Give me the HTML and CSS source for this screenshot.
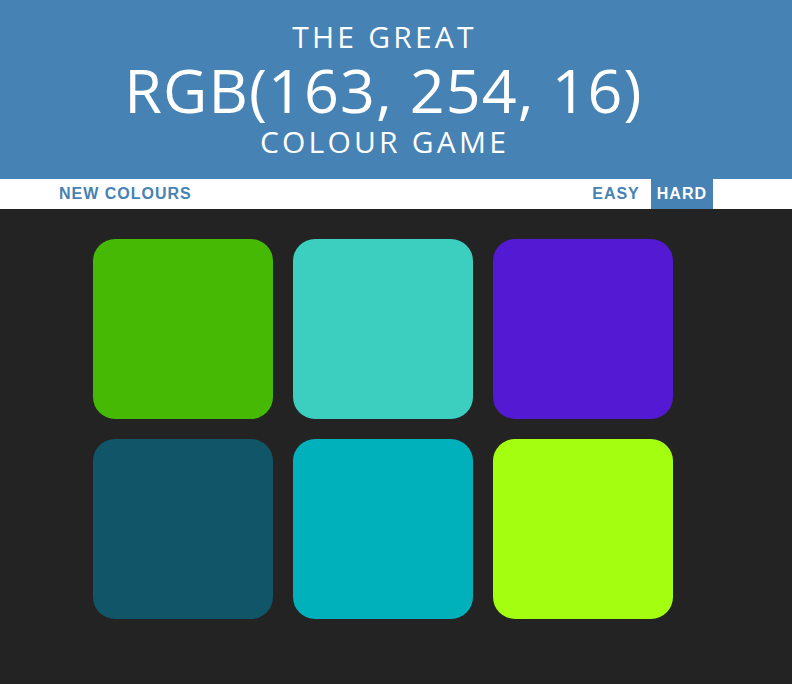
FILE: index.html
```html
<!DOCTYPE html>
<html lang="en">
<head>
<meta charset="utf-8">
<title>The Great RGB Colour Game</title>
<link rel="stylesheet" href="styles.css">
</head>
<body>
<header class="header">
  <h1 class="title">
    <span class="title-small">THE GREAT</span>
    <span class="title-big">RGB(163, 254, 16)</span>
    <span class="title-small">COLOUR GAME</span>
  </h1>
</header>
<nav class="stripe">
  <div class="stripe-inner">
    <button class="btn">NEW COLOURS</button>
    <span class="spacer"></span>
    <button class="btn">EASY</button>
    <button class="btn btn-selected">HARD</button>
  </div>
</nav>
<main class="board">
  <div class="square" style="background:#46b904"></div>
  <div class="square" style="background:#3ccfbf"></div>
  <div class="square" style="background:#5419d2"></div>
  <div class="square" style="background:#105568"></div>
  <div class="square" style="background:#00b0bb"></div>
  <div class="square" style="background:#a3fe10"></div>
</main>
</body>
</html>
```
FILE: styles.css
```css
html, body {
  margin: 0;
  padding: 0;
}
body {
  background: #232323;
  font-family: "Open Sans", "DejaVu Sans", sans-serif;
  width: 792px;
  height: 684px;
  overflow: hidden;
}
.header {
  background: #4682b4;
  height: 179px;
  padding-right: 26px;
  box-sizing: border-box;
  padding-top: 18px;
}
.title {
  margin: 0;
  color: #fff;
  font-weight: 400;
  text-align: center;
  display: flex;
  flex-direction: column;
  align-items: center;
}
.title-small {
  font-size: 30px;
  line-height: 38px;
  letter-spacing: 3.2px;
  margin-right: -3px;
}
.title-big {
  font-size: 61px;
  line-height: 67px;
  letter-spacing: 1.1px;
  margin-right: -1px;
}
.stripe {
  background: #fff;
  height: 30px;
}
.stripe-inner {
  display: flex;
  height: 30px;
  padding-left: 53px;
  padding-right: 79px;
}
.spacer {
  flex: 1;
}
.btn {
  border: none;
  background: none;
  color: #4682b4;
  font-family: "Liberation Sans", Arial, sans-serif;
  font-weight: 700;
  font-size: 16px;
  letter-spacing: 1px;
  height: 30px;
  padding: 0 6px;
  margin: 0;
}
.btn-selected {
  background: #4682b4;
  color: #fff;
  margin-left: 5px;
}
.board {
  display: grid;
  grid-template-columns: repeat(3, 180px);
  grid-auto-rows: 180px;
  gap: 20px;
  padding-top: 30px;
  padding-left: 93px;
}
.square {
  border-radius: 22px;
}
```
